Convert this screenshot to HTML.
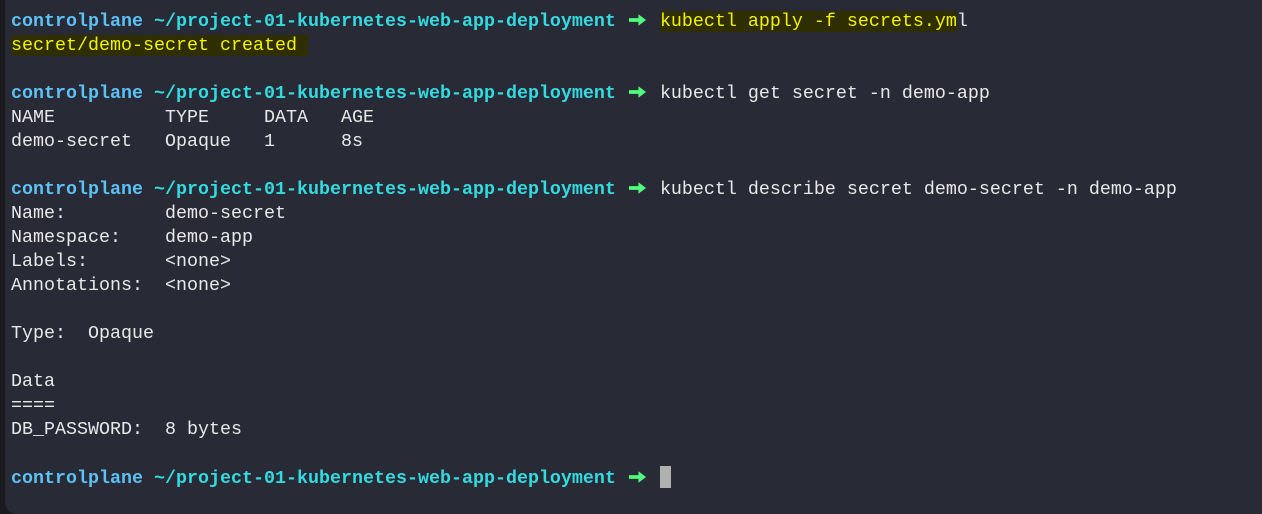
<!DOCTYPE html>
<html><head><meta charset="utf-8"><style>
html,body{margin:0;padding:0;width:1262px;height:514px;overflow:hidden;background:#1b1b1f;}
.t{position:absolute;left:5px;top:0;width:1257px;height:514px;background:#282a36;border-bottom-left-radius:12px;}
pre{position:absolute;left:11px;top:10px;margin:0;font-family:"Liberation Mono","DejaVu Sans Mono",monospace;font-size:18.33px;line-height:24px;color:#e8e8ea;}
.u{color:#5cc1f5;font-weight:bold}
.p{color:#33dbe0;font-weight:bold}
.a{display:inline-block;width:33px;height:14px;vertical-align:-1px;position:relative}
.a svg{position:absolute;left:1px;top:0}
.h{color:#f2f200;background:#2e2e00;}
.c{display:inline-block;width:11px;height:22px;background:#b0b0b0;vertical-align:-5px}
</style></head><body><div class="t"></div>
<pre><span class="u">controlplane</span> <span class="p">~/project-01-kubernetes-web-app-deployment</span> <span class="a"><svg width="19" height="14" viewBox="0 0 20 14"><path d="M1 5h10V1l8 6-8 6V9H1z" fill="#50fa7b"/></svg></span><span class="h">kubectl apply -f secrets.ym</span>l
<span class="h">secret/demo-secret created </span>

<span class="u">controlplane</span> <span class="p">~/project-01-kubernetes-web-app-deployment</span> <span class="a"><svg width="19" height="14" viewBox="0 0 20 14"><path d="M1 5h10V1l8 6-8 6V9H1z" fill="#50fa7b"/></svg></span>kubectl get secret -n demo-app
NAME          TYPE     DATA   AGE
demo-secret   Opaque   1      8s

<span class="u">controlplane</span> <span class="p">~/project-01-kubernetes-web-app-deployment</span> <span class="a"><svg width="19" height="14" viewBox="0 0 20 14"><path d="M1 5h10V1l8 6-8 6V9H1z" fill="#50fa7b"/></svg></span>kubectl describe secret demo-secret -n demo-app
Name:         demo-secret
Namespace:    demo-app
Labels:       &lt;none&gt;
Annotations:  &lt;none&gt;

Type:  Opaque

Data
====
DB_PASSWORD:  8 bytes

<span class="u">controlplane</span> <span class="p">~/project-01-kubernetes-web-app-deployment</span> <span class="a"><svg width="19" height="14" viewBox="0 0 20 14"><path d="M1 5h10V1l8 6-8 6V9H1z" fill="#50fa7b"/></svg></span><span class="c"></span></pre>
</body></html>
